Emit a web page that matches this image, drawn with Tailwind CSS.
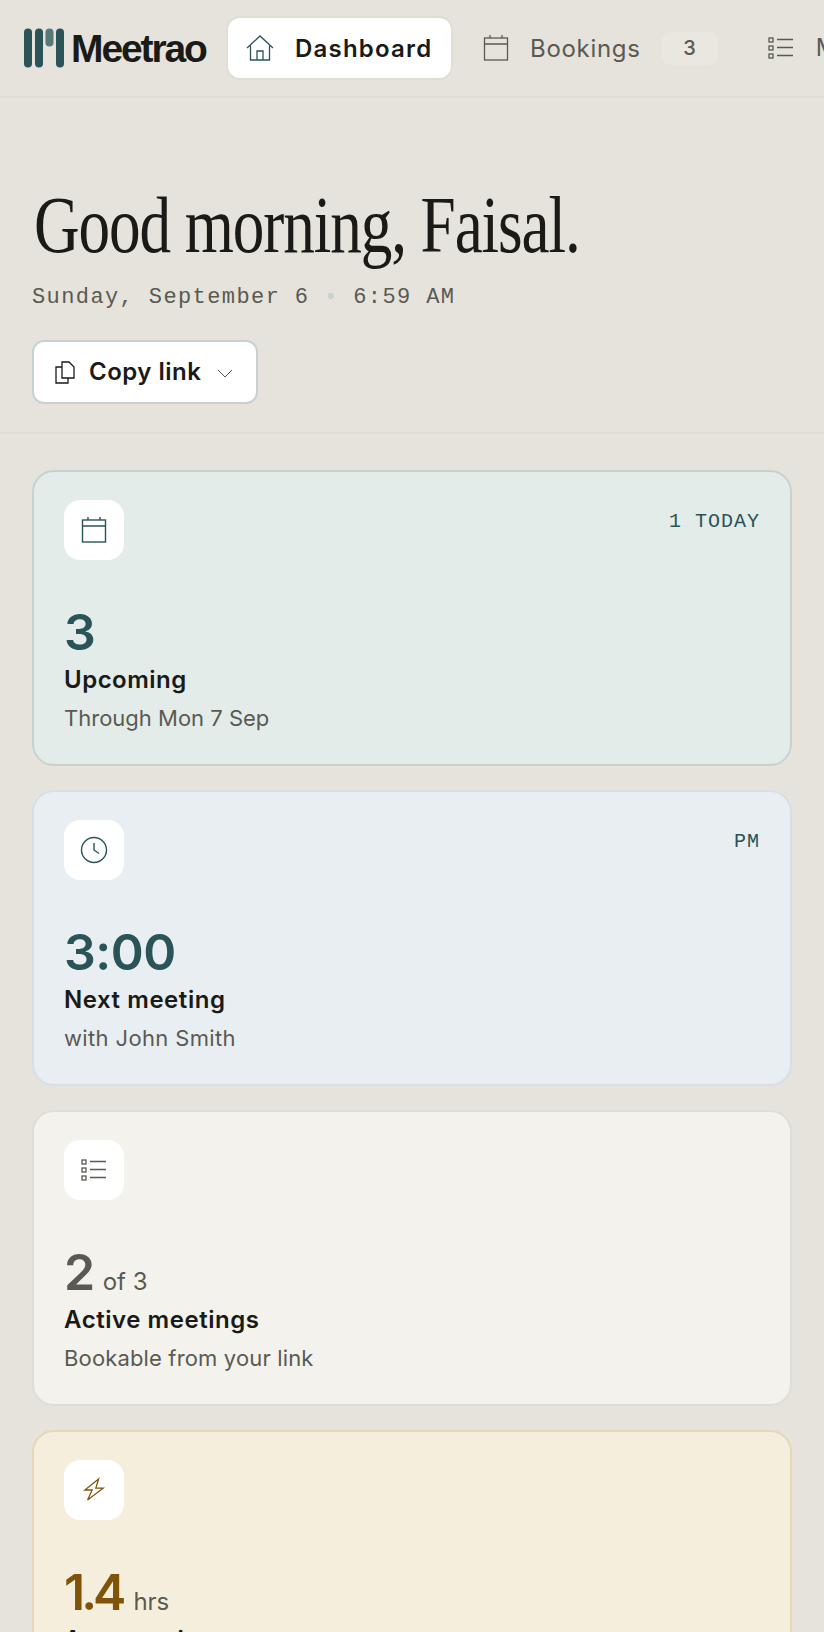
<!DOCTYPE html>
<html lang="en">
<head>
  <meta charset="UTF-8" />
  <meta name="viewport" content="width=device-width, initial-scale=1.0" />
  <title>Meetrao Dashboard</title>
  <script src="https://cdn.jsdelivr.net/npm/@tailwindcss/browser@4"></script>
</head>
<body class="h-[1632px] overflow-hidden bg-[#e5e3db] font-['Inter',sans-serif] text-[#1a1a17]">
  <!-- top nav -->
  <header class="h-[98px] flex items-center border-b-2 border-[#dfddd4] pl-6 overflow-hidden">
    <div class="flex items-center shrink-0 w-[204px]">
      <svg class="w-[41px] h-[40px] shrink-0" viewBox="0 0 41 40" fill="#2a5457">
        <rect x="0" y="0.5" width="8" height="39" rx="4" />
        <rect x="11" y="0.5" width="8" height="39" rx="4" />
        <rect x="21.5" y="0.5" width="8" height="18" rx="4" opacity="0.75" />
        <rect x="32" y="0.5" width="8" height="39" rx="4" />
      </svg>
      <span class="ml-[6px] font-['Liberation_Sans',sans-serif] font-bold text-[39px] tracking-[-2.1px] leading-none">Meetrao</span>
    </div>
    <nav class="flex items-center shrink-0">
      <a class="flex items-center w-[223px] h-[60px] pl-[17px] bg-white rounded-[12px] shadow-[0_0_0_2px_#dfddd4]">
        <svg class="w-[30px] h-[30px]" viewBox="0 0 30 30" fill="none" stroke="#2a5457" stroke-width="1.3">
          <path d="M2 15 15 3l13 12" /><path d="M5.5 12.5V27h19V12.5" /><path d="M12 27v-9h6v9" />
        </svg>
        <span class="ml-[20px] font-semibold text-[24px] tracking-[1.2px] translate-y-[1px]">Dashboard</span>
      </a>
      <a class="flex items-center ml-[32px] text-[#5a5a52]">
        <svg class="w-[26px] h-[28px]" viewBox="0 0 26 28" fill="none" stroke="#5a5a52" stroke-width="1.3">
          <rect x="1.5" y="4" width="23" height="22" /><path d="M1.5 10h23M7 1v3M19 1v3" />
        </svg>
        <span class="ml-[21px] text-[24px] tracking-[0.7px] translate-y-[1px]">Bookings</span>
        <span class="ml-[21px] w-[56px] h-[33px] flex items-center justify-center rounded-[8px] bg-[#e9e7df] text-[20px] font-medium">3</span>
      </a>
      <a class="flex items-center ml-[50px] text-[#5a5a52]">
        <svg class="w-[26px] h-[24px]" viewBox="0 0 26 24" fill="none" stroke="#5a5a52" stroke-width="1.3">
          <rect x="1" y="2" width="4" height="4" /><rect x="1" y="10" width="4" height="4" /><rect x="1" y="18" width="4" height="4" />
          <path d="M9 3.5h16M9 11.5h16M9 19.5h16" />
        </svg>
        <span class="ml-[22px] text-[24px] tracking-[0.7px]">Meetings</span>
      </a>
    </nav>
  </header>

  <!-- greeting -->
  <section class="h-[336px] px-8 pt-[79px] border-b-2 border-[#dfddd4]">
    <h1 class="ml-[2px] font-['Liberation_Serif',serif] text-[81px] leading-[96px] tracking-[-1.4px] origin-left scale-x-[0.78] whitespace-nowrap">Good morning, Faisal.</h1>
    <p class="mt-[9px] font-['Liberation_Mono',monospace] text-[22px] leading-[32px] tracking-[1.4px] text-[#5a5a52]">Sunday, September 6 <span class="text-[#c5d3cf]">•</span> 6:59 AM</p>
    <button class="mt-[26px] flex items-center w-[226px] h-[64px] pl-[20px] bg-white rounded-[12px] border-2 border-[#c5d3cf]">
      <svg class="w-[22px] h-[24px]" viewBox="0 0 22 24" fill="none" stroke="#1a1a17" stroke-width="1.3">
        <path d="M8 2h7l5 5v11H8z" /><path d="M8 7H2v16h12v-5" />
      </svg>
      <span class="ml-[13px] font-semibold text-[24px] tracking-[0.5px]">Copy link</span>
      <svg class="ml-[16px] w-[16px] h-[10px] translate-y-[2px]" viewBox="0 0 16 10" fill="none" stroke="#5a5a52" stroke-width="1"><path d="M1 1l7 7 7-7" /></svg>
    </button>
  </section>

  <!-- stat cards -->
  <main class="px-8 pt-9 flex flex-col gap-6">
    <article class="h-[296px] rounded-[22px] border-2 border-[#c5d3cf] bg-[#e3ece8] px-[30px] py-[28px] flex flex-col">
      <div class="flex justify-between items-start">
        <div class="w-[60px] h-[60px] rounded-[16px] bg-white flex items-center justify-center">
          <svg class="w-[26px] h-[28px]" viewBox="0 0 26 28" fill="none" stroke="#2a5457" stroke-width="1.4">
            <rect x="1.5" y="4" width="23" height="22" /><path d="M1.5 10h23M7 1v3M19 1v3" />
          </svg>
        </div>
        <span class="mt-[7px] font-['Liberation_Mono',monospace] text-[20px] tracking-[1px] text-[#2a5457]">1 TODAY</span>
      </div>
      <div class="mt-[42px] text-[50px] leading-[60px] font-semibold tracking-[-0.5px] text-[#2a5457]">3</div>
      <div class="mt-[2px] text-[24px] leading-[32px] font-semibold tracking-[0.5px]">Upcoming</div>
      <div class="mt-[6px] text-[22px] leading-[32px] text-[#5a5a52]">Through Mon 7 Sep</div>
    </article>

    <article class="h-[296px] rounded-[22px] border-2 border-[#d5dfe6] bg-[#e9eef2] px-[30px] py-[28px] flex flex-col">
      <div class="flex justify-between items-start">
        <div class="w-[60px] h-[60px] rounded-[16px] bg-white flex items-center justify-center">
          <svg class="w-[28px] h-[28px]" viewBox="0 0 28 28" fill="none" stroke="#2a5457" stroke-width="1.4">
            <circle cx="14" cy="14" r="12.5" /><path d="M14 7v7l5 3.5" />
          </svg>
        </div>
        <span class="mt-[7px] font-['Liberation_Mono',monospace] text-[20px] tracking-[1px] text-[#2a5457]">PM</span>
      </div>
      <div class="mt-[42px] text-[50px] leading-[60px] font-semibold tracking-[-0.5px] text-[#2a5457]">3:00</div>
      <div class="mt-[2px] text-[24px] leading-[32px] font-semibold tracking-[0.55px]">Next meeting</div>
      <div class="mt-[6px] text-[22px] leading-[32px] tracking-[0.35px] text-[#5a5a52]">with John Smith</div>
    </article>

    <article class="h-[296px] rounded-[22px] border-2 border-[#dfddd4] bg-[#f3f2ed] px-[30px] py-[28px] flex flex-col">
      <div class="w-[60px] h-[60px] shrink-0 rounded-[16px] bg-white flex items-center justify-center">
        <svg class="w-[26px] h-[24px]" viewBox="0 0 26 24" fill="none" stroke="#5a5a52" stroke-width="1.3">
          <rect x="1" y="2" width="4" height="4" /><rect x="1" y="10" width="4" height="4" /><rect x="1" y="18" width="4" height="4" />
          <path d="M9 3.5h16M9 11.5h16M9 19.5h16" />
        </svg>
      </div>
      <div class="mt-[42px] text-[50px] leading-[60px] font-semibold tracking-[-0.5px] text-[#5a5a52]">2<span class="ml-[8px] text-[24px] leading-none font-normal tracking-normal">of 3</span></div>
      <div class="mt-[2px] text-[24px] leading-[32px] font-semibold tracking-[0.55px]">Active meetings</div>
      <div class="mt-[6px] text-[22px] leading-[32px] tracking-[0.15px] text-[#5a5a52]">Bookable from your link</div>
    </article>

    <article class="h-[296px] rounded-[22px] border-2 border-[#e6d8b6] bg-[#f5eedc] px-[30px] py-[28px] flex flex-col">
      <div class="w-[60px] h-[60px] shrink-0 rounded-[16px] bg-white flex items-center justify-center">
        <svg class="w-[22px] h-[26px]" viewBox="0 0 24 28" fill="none" stroke="#7f5408" stroke-width="1.4" stroke-linejoin="miter">
          <path d="M17 2 2 14h8l-5 11 17-13h-8z" />
        </svg>
      </div>
      <div class="mt-[42px] text-[50px] leading-[60px] font-semibold text-[#7f5408] tracking-[-4px]">1.4<span class="ml-[11px] text-[24px] leading-none font-normal tracking-normal text-[#5a5a52]">hrs</span></div>
      <div class="mt-[2px] text-[24px] leading-[32px] font-semibold tracking-[0.55px]">Avg meeting</div>
    </article>
  </main>
</body>
</html>
